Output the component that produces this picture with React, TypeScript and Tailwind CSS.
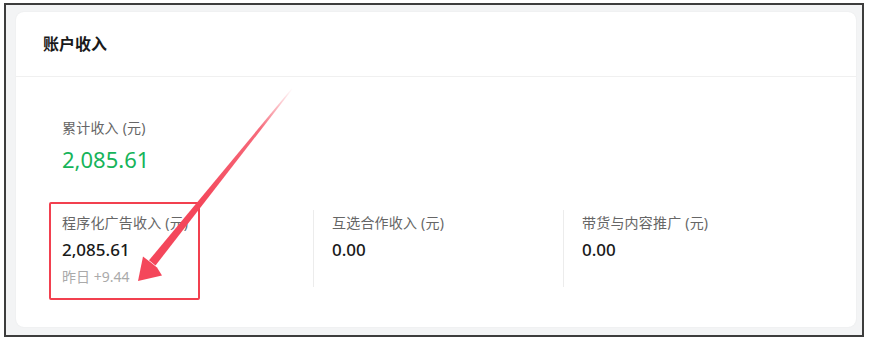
import React from "react";

const stats = [
  { label: "程序化广告收入 (元)", value: "2,085.61", sub: "昨日 +9.44" },
  { label: "互选合作收入 (元)", value: "0.00", sub: "" },
  { label: "带货与内容推广 (元)", value: "0.00", sub: "" },
];

const Arrow = () => {
  // tail (292,88) -> tip (138,281)
  return (
    <svg
      className="absolute left-0 top-0 pointer-events-none"
      width="869"
      height="342"
      viewBox="0 0 869 342"
    >
      <defs>
        <linearGradient id="tailFade" x1="292" y1="88" x2="200" y2="204" gradientUnits="userSpaceOnUse">
          <stop offset="0" stopColor="#f4475b" stopOpacity="0" />
          <stop offset="0.35" stopColor="#f4475b" stopOpacity="0.8" />
          <stop offset="1" stopColor="#f4475b" stopOpacity="1" />
        </linearGradient>
      </defs>
      <path
        d="M292 88 L292.8 88.7 L155.5 265.5 L149 260.3 Z"
        fill="url(#tailFade)"
      />
      <path d="M138 281 L143 256.5 L150.2 262 L157 267.5 L162 275.5 Z" fill="#f4475b" />
    </svg>
  );
};

export default function App() {
  return (
    <div
      className="relative w-[869px] h-[342px] bg-white pl-[4px] pt-[3px]"
      style={{ fontFamily: '"Noto Sans", "Noto Sans CJK SC", sans-serif' }}
    >
      <div className="w-[860px] h-[334px] border-2 border-[#3d3d3d] bg-[#f3f4f5] pl-[10px] pt-[7px] pr-[6px] pb-[8px]">
        <div className="h-full bg-white rounded-lg shadow-[0_0_2px_rgba(0,0,0,0.06)]">
          <div className="h-[65px] flex items-center pl-[27px] border-b border-[#f0f0f0]">
            <span className="text-[16px] font-bold text-[#1a1a1a]">账户收入</span>
          </div>
          <div className="pl-[46px] pt-[40px]">
            <div className="text-[14px] leading-[22px] text-[#666] tracking-[0.2px]">累计收入 (元)</div>
            <div className="mt-[5px] text-[22px] leading-[30px] text-[#16b45a]">2,085.61</div>
            <div className="mt-[36px] flex">
              {stats.map((s, i) => (
                <div
                  key={i}
                  className={
                    i === 0
                      ? "w-[251px] h-[77px]"
                      : "w-[250px] h-[77px] border-l border-[#ececec] pl-[18px]"
                  }
                >
                  <div className="mt-[2px] text-[14px] leading-[22px] text-[#666] tracking-[0.2px]">{s.label}</div>
                  <div className="mt-[4px] text-[17px] leading-[24px] font-medium text-[#1a1a1a]">
                    {s.value}
                  </div>
                  {s.sub && (
                    <div className="mt-[5px] text-[14px] leading-[20px] text-[#aaa]">{s.sub}</div>
                  )}
                </div>
              ))}
            </div>
          </div>
        </div>
      </div>
      <div className="absolute left-[49px] top-[202px] w-[151px] h-[98px] border-2 border-[#f2404f] rounded-[2px]" />
      <Arrow />
    </div>
  );
}
